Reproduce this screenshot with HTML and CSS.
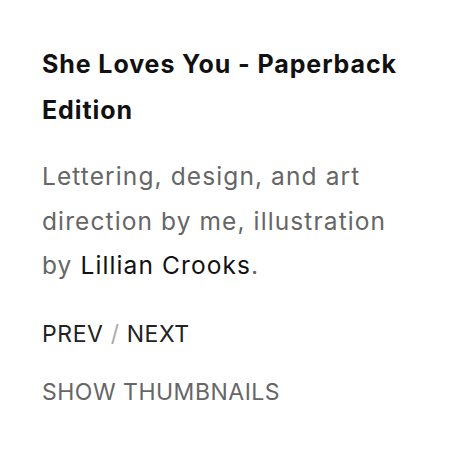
FILE: index.html
```html
<!DOCTYPE html>
<html>
<head>
<meta charset="utf-8">
<link rel="stylesheet" href="styles.css">
</head>
<body>
<div class="page">
  <h1 class="title">She Loves You - Paperback Edition</h1>
  <p class="desc">Lettering, design, and art direction by me, illustration by <a class="link" href="#">Lillian Crooks</a>.</p>
  <div class="nav"><a class="nav-link" href="#">PREV</a> <span class="sep">/</span> <a class="nav-link" href="#">NEXT</a></div>
  <div class="thumbs"><a class="thumbs-link" href="#">SHOW THUMBNAILS</a></div>
</div>
</body>
</html>
```
FILE: styles.css
```css
html, body {
  margin: 0;
  padding: 0;
  background: #fff;
}
.page {
  padding: 42px 42px 0 42px;
  font-family: Inter, "Open Sans", sans-serif;
}
.title {
  margin: 0;
  font-size: 25px;
  font-weight: 700;
  line-height: 45.5px;
  letter-spacing: 0.9px;
  color: #111;
}
.desc {
  margin: 21px 0 0 0;
  font-size: 24.5px;
  line-height: 44.5px;
  letter-spacing: 1.1px;
  color: #666;
}
.link {
  color: #111;
  text-decoration: none;
}
.nav {
  margin-top: 31px;
  font-size: 23px;
  line-height: 30px;
  letter-spacing: 0.6px;
  color: #222;
}
.nav-link {
  color: #222;
  text-decoration: none;
}
.sep {
  color: #aaa;
}
.thumbs {
  margin-top: 28px;
  font-size: 23px;
  line-height: 30px;
  letter-spacing: 0.5px;
}
.thumbs-link {
  color: #666;
  text-decoration: none;
}
```
